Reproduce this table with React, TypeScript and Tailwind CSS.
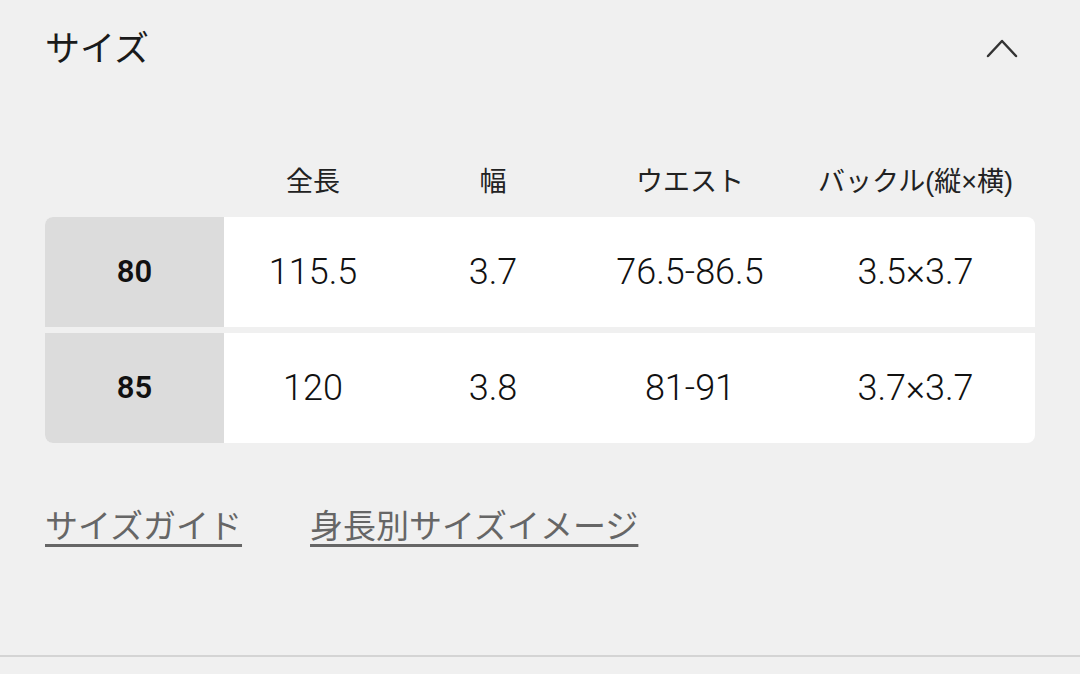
import { useState } from 'react';

const columns = ['全長', '幅', 'ウエスト', 'バックル(縦×横)'];

const rows = [
  { size: '80', values: ['115.5', '3.7', '76.5-86.5', '3.5×3.7'] },
  { size: '85', values: ['120', '3.8', '81-91', '3.7×3.7'] },
];

const grid = 'grid grid-cols-[179px_178px_182px_212px_1fr]';

export default function App() {
  const [open, setOpen] = useState(true);

  return (
    <div
      className="min-h-[674px] w-full bg-[#f0f0f0] text-[#1a1a1a]"
      style={{ fontFamily: '"Liberation Sans", "Noto Sans CJK JP", sans-serif' }}
    >
      <section className="h-[657px] border-b-2 border-[#d4d4d4] px-[45px] pt-[26px]">
        {/* Accordion header */}
        <button
          type="button"
          onClick={() => setOpen(!open)}
          className="flex h-[44px] w-full items-center justify-between"
        >
          <span className="text-[35px] leading-none text-[#1a1a1a]">サイズ</span>
          <svg width="32" height="20" viewBox="0 0 32 20" className="mr-[17px]">
            <polyline
              points="2,18 16,3 30,18"
              fill="none"
              stroke="#333"
              strokeWidth="2.5"
              strokeLinecap="round"
              strokeLinejoin="round"
            />
          </svg>
        </button>

        {open && (
          <>
            {/* Column labels */}
            <div className={`${grid} mt-[87px] mb-[10px] h-[50px] items-center`}>
              <div />
              {columns.map((c) => (
                <div key={c} className="text-center text-[27px] text-[#222]">
                  {c}
                </div>
              ))}
            </div>

            {/* Table */}
            <div
              className="flex flex-col gap-[6px] overflow-hidden rounded-lg"
              style={{ fontFamily: 'Roboto, "Noto Sans CJK JP", sans-serif' }}
            >
              {rows.map((r) => (
                <div key={r.size} className={`${grid} h-[110px] bg-white`}>
                  <div className="flex items-center justify-center bg-[#dcdcdc] text-[31px] font-semibold text-[#111]">
                    {r.size}
                  </div>
                  {r.values.map((v, i) => (
                    <div
                      key={i}
                      className="flex items-center justify-center text-[36px] font-light text-[#111]"
                    >
                      {v}
                    </div>
                  ))}
                </div>
              ))}
            </div>

            {/* Links */}
            <div className="mt-[62px] flex items-center gap-[68px] text-[33px] leading-[44px] text-[#666]">
              <a href="#" className="underline decoration-[3px] underline-offset-[6px]">
                サイズガイド
              </a>
              <a href="#" className="underline decoration-[3px] underline-offset-[6px]">
                身長別サイズイメージ
              </a>
            </div>
          </>
        )}
      </section>
    </div>
  );
}
